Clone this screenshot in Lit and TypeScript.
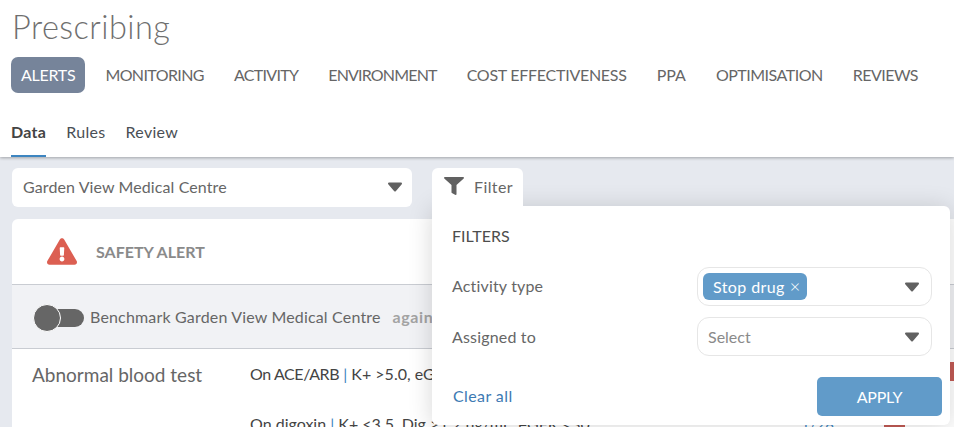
import { LitElement, html, css, svg } from "lit";
import { customElement } from "lit/decorators.js";

const NAV: [string, number][] = [
  ["ALERTS", -0.27],
  ["MONITORING", -0.6],
  ["ACTIVITY", -0.7],
  ["ENVIRONMENT", -0.82],
  ["COST EFFECTIVENESS", -0.27],
  ["PPA", 0],
  ["OPTIMISATION", -0.5],
  ["REVIEWS", -0.53],
];

const caret = svg`<svg class="caret" viewBox="0 0 16 10" width="16" height="10"><path d="M2 1.5h12L8 8.5z" fill="#616161" stroke="#616161" stroke-width="2" stroke-linejoin="round"/></svg>`;

@customElement("app-root")
export class AppRoot extends LitElement {
  static styles = css`
    :host {
      display: block;
      position: relative;
      width: 954px;
      height: 427px;
      overflow: hidden;
      background: #e6e9ef;
      font-family: Lato, "Noto Sans", sans-serif;
      font-size: 16px;
      color: #666;
    }
    .header {
      height: 157px;
      box-sizing: border-box;
      background: #fff;
      padding: 6px 11px 0;
      box-shadow: 0 1px 3px rgba(0, 0, 0, 0.3);
      position: relative;
    }
    h1 {
      margin: 0 0 0 1px;
      font-size: 32.5px;
      line-height: 41px;
      font-weight: 300;
      color: #6f6f6f;
      letter-spacing: 0.45px;
    }
    .nav {
      display: flex;
      gap: 10px;
      margin-top: 10px;
    }
    .nav span {
      height: 36px;
      line-height: 36px;
      padding: 0 10px;
      border-radius: 7px;
      white-space: nowrap;
    }
    .nav .active {
      background: #76849a;
      color: #fff;
    }
    .tabs {
      display: flex;
      gap: 20px;
      margin-top: 26px;
    }
    .tabs span {
      height: 38px;
      line-height: 26px;
      box-sizing: border-box;
      color: #4a4f55;
      letter-spacing: 0.3px;
    }
    .tabs .active {
      font-weight: 700;
      color: #444;
      border-bottom: 2px solid #3d85c0;
    }
    .content {
      padding: 11px 0 0 12px;
    }
    .org {
      width: 400px;
      height: 39px;
      box-sizing: border-box;
      background: #fff;
      border-radius: 6px;
      padding: 0 9px 2px 11px;
      display: flex;
      align-items: center;
      justify-content: space-between;
      letter-spacing: 0.1px;
    }
    .card {
      width: 1000px;
      margin-top: 12px;
      background: #fff;
      border-radius: 6px 6px 0 0;
    }
    .card-title {
      height: 66px;
      display: flex;
      align-items: center;
      gap: 19px;
      padding-left: 35px;
      font-weight: 700;
      color: #8a8a8a;
      border-bottom: 1px solid #c9ccd2;
      box-sizing: border-box;
    }
    .bench {
      height: 64px;
      box-sizing: border-box;
      background: #f1f2f5;
      border-bottom: 1px solid #c9ccd2;
      display: flex;
      align-items: center;
      padding: 3px 0 0 21px;
      color: #666;
    }
    .track {
      width: 37px;
      height: 18px;
      border-radius: 9px;
      background: #666;
      margin-left: -14px;
    }
    .knob {
      width: 26px;
      height: 26px;
      border-radius: 50%;
      background: #666;
      border: 1px solid #fff;
      position: relative;
      flex: none;
    }
    .bench-label {
      margin: -3px 0 0 6px;
      white-space: nowrap;
      letter-spacing: 0.17px;
    }
    .muted {
      margin: -3px 0 0 12px;
      font-weight: 700;
      color: #a3a3a3;
      letter-spacing: 0.6px;
    }
    .rows {
      display: grid;
      grid-template-columns: 218px 1fr;
      padding: 13px 0 0 20px;
    }
    .group {
      font-size: 19px;
      line-height: 26px;
      color: #666;
    }
    .items {
      display: flex;
      flex-direction: column;
      gap: 26px;
      color: #444;
      line-height: 24px;
    }
    .item {
      display: flex;
      position: relative;
      white-space: nowrap;
    }
    .item b {
      font-weight: 400;
      color: #3d85c0;
    }
    .tight {
      letter-spacing: -0.4px;
    }
    .link {
      position: absolute;
      left: 551px;
      top: 0;
      color: #3d85c0;
      font-size: 15px;
    }
    .bar {
      position: absolute;
      top: 0;
      height: 19px;
      background: #c25b55;
    }
    .panel {
      position: absolute;
      left: 432px;
      top: 206px;
      width: 518px;
      height: 219px;
      box-sizing: border-box;
      padding: 20px 8px 0 20px;
      background: #fff;
      border-radius: 0 6px 6px 6px;
      box-shadow: 0 2px 24px rgba(0, 0, 0, 0.16);
      color: #666;
    }
    .filter-tab {
      position: absolute;
      left: 432px;
      top: 168px;
      width: 91px;
      height: 40px;
      box-sizing: border-box;
      padding: 0 0 4px 12px;
      background: #fff;
      border-radius: 6px 6px 0 0;
      display: flex;
      align-items: center;
      gap: 10px;
      letter-spacing: 0.4px;
    }
    .panel h2 {
      margin: 0;
      font-size: 16px;
      line-height: 20px;
      font-weight: 400;
      color: #4d4d4d;
    }
    .field {
      display: grid;
      grid-template-columns: 245px 235px;
      align-items: center;
    }
    .field > span {
      letter-spacing: 0.17px;
    }
    .field.first {
      margin-top: 21px;
    }
    .field.first > span {
      padding-bottom: 2px;
    }
    .field.second {
      margin-top: 11px;
    }
    .box {
      height: 39px;
      box-sizing: border-box;
      border: 1px solid #e6e6e6;
      border-radius: 12px;
      padding: 0 11px 0 5px;
      display: flex;
      align-items: center;
      justify-content: space-between;
    }
    .box.empty {
      padding-left: 10px;
      color: #8a8a8a;
    }
    .chip {
      height: 27px;
      line-height: 27px;
      padding: 0 6px 0 10px;
      border-radius: 6px;
      background: #619bc9;
      color: #fff;
      letter-spacing: 0.4px;
      display: flex;
      gap: 5px;
    }
    .chip i {
      font-style: normal;
      font-size: 18px;
      font-weight: 300;
    }
    .actions {
      display: flex;
      align-items: center;
      justify-content: space-between;
      margin-top: 21px;
    }
    .actions a {
      color: #3d7ab3;
      margin-left: 1px;
      letter-spacing: 0.4px;
      padding-bottom: 2px;
    }
    .actions button {
      width: 125px;
      height: 39px;
      border: 0;
      border-radius: 5px;
      background: #619bc9;
      color: #fff;
      font: inherit;
      letter-spacing: -0.2px;
    }
  `;

  render() {
    return html`
      <div class="header">
        <h1>Prescribing</h1>
        <div class="nav">
          ${NAV.map(
            ([label, spacing], i) =>
              html`<span class=${i === 0 ? "active" : ""} style="letter-spacing: ${spacing}px">${label}</span>`,
          )}
        </div>
        <div class="tabs">
          <span class="active">Data</span><span>Rules</span><span>Review</span>
        </div>
      </div>
      <div class="content">
        <div class="org">Garden View Medical Centre ${caret}</div>
        <div class="card">
          <div class="card-title">
            <svg width="30" height="27" viewBox="0 0 576 512"><path fill="#dc5f52" d="M569.517 440.013C587.975 472.007 564.806 512 527.94 512H48.054c-36.937 0-59.999-40.055-41.577-71.987L246.423 23.985c18.467-32.009 64.72-31.951 83.154 0l239.94 416.028zM288 354c-25.405 0-46 20.595-46 46s20.595 46 46 46 46-20.595 46-46-20.595-46-46-46zm-43.673-165.346l7.418 136c.347 6.364 5.609 11.346 11.982 11.346h48.546c6.373 0 11.635-4.982 11.982-11.346l7.418-136c.375-6.874-5.098-12.654-11.982-12.654h-63.383c-6.884 0-12.356 5.78-11.981 12.654z"/></svg>
            SAFETY ALERT
          </div>
          <div class="bench">
            <span class="knob"></span><span class="track"></span>
            <span class="bench-label">Benchmark Garden View Medical Centre</span>
            <span class="muted">against</span>
          </div>
          <div class="rows">
            <div class="group">Abnormal blood test</div>
            <div class="items">
              <div class="item">
                <span><span class="tight">On ACE/ARB</span> <b>|</b> K+ &gt;5.0, eGFR &lt;30</span>
                <span class="bar" style="left: 700px; width: 80px"></span>
              </div>
              <div class="item">
                <span>On digoxin <b>|</b> K+ &lt;3.5, Dig &gt;1.2 ng/mL, eGFR &lt;30</span>
                <span class="link">1/28</span>
                <span class="bar" style="left: 634px; width: 21px"></span>
              </div>
            </div>
          </div>
        </div>
      </div>
      <div class="panel">
        <h2>FILTERS</h2>
        <div class="field first">
          <span>Activity type</span>
          <div class="box"><span class="chip">Stop drug <i>×</i></span>${caret}</div>
        </div>
        <div class="field second">
          <span>Assigned to</span>
          <div class="box empty"><span>Select</span>${caret}</div>
        </div>
        <div class="actions">
          <a>Clear all</a>
          <button>APPLY</button>
        </div>
      </div>
      <div class="filter-tab">
        <svg width="20" height="18" viewBox="0 0 512 512" preserveAspectRatio="none"><path fill="#616161" d="M487.976 0H24.028C2.71 0-8.047 25.866 7.058 40.971L192 225.941V432c0 7.831 3.821 15.17 10.237 19.662l80 55.98C298.02 518.69 320 507.493 320 487.98V225.941l184.947-184.97C520.021 25.896 509.338 0 487.976 0z"/></svg>
        Filter
      </div>
    `;
  }
}
